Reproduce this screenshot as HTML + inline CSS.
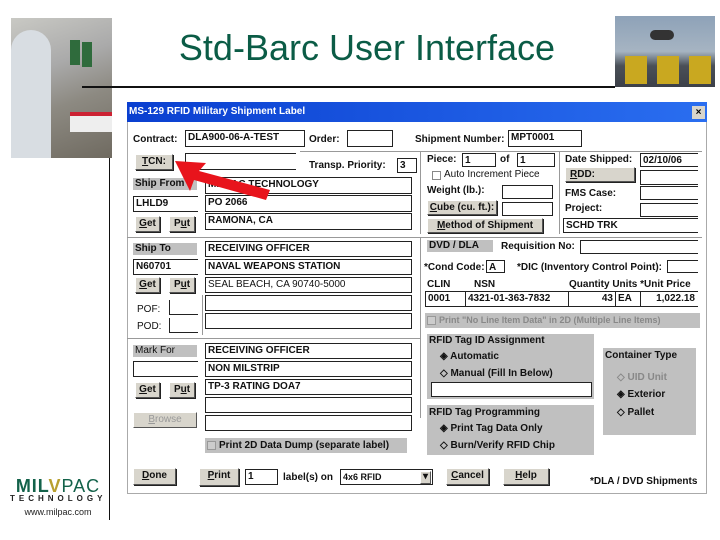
<!DOCTYPE html>
<html><head><meta charset="utf-8"><style>
*{margin:0;padding:0;box-sizing:border-box}
body{width:720px;height:540px;background:#fff;position:relative;overflow:hidden;font-family:"Liberation Sans",sans-serif}
.a{position:absolute}
.l{position:absolute;font-size:10px;font-weight:bold;color:#111;white-space:nowrap;line-height:12px}
.i{position:absolute;background:#fff;border:1px solid #222;font-size:10px;font-weight:bold;line-height:14px;padding-left:2px;white-space:nowrap;overflow:hidden;color:#111}
.b{position:absolute;background:#d8d5cc;border:1px solid;border-color:#fff #555 #555 #fff;box-shadow:1px 1px 0 #222;font-size:10px;font-weight:bold;text-align:center;line-height:14px;color:#111}
.g{position:absolute;background:#c0c0c0;font-size:10px;font-weight:bold;line-height:12px;padding-left:2px;color:#111;white-space:nowrap}
.hl{position:absolute;height:1px;background:#999}
.vl{position:absolute;width:1px;background:#999}
</style></head><body>
<div class="a" style="left:11px;top:18px;width:101px;height:140px;background:linear-gradient(160deg,#c9c9c4 0%,#aaa 35%,#8d8a82 60%,#6f6a60 100%)"></div>
<div class="a" style="left:11px;top:30px;width:40px;height:128px;background:#d8dde2;border-radius:20px 20px 0 0"></div>
<div class="a" style="left:70px;top:40px;width:10px;height:25px;background:#2f6b3c"></div>
<div class="a" style="left:82px;top:42px;width:10px;height:25px;background:#2f6b3c"></div>
<div class="a" style="left:70px;top:112px;width:42px;height:20px;background:#eee;border-top:4px solid #c23"></div>
<div class="a" style="left:615px;top:16px;width:100px;height:71px;background:linear-gradient(180deg,#8ea2b8 0%,#a6b4c2 50%,#4a5058 70%,#3c4048 100%)"></div>
<div class="a" style="left:625px;top:56px;width:22px;height:28px;background:#c9a820"></div>
<div class="a" style="left:657px;top:56px;width:22px;height:28px;background:#c9a820"></div>
<div class="a" style="left:689px;top:56px;width:22px;height:28px;background:#c9a820"></div>
<div class="a" style="left:650px;top:30px;width:24px;height:10px;background:#333;border-radius:5px"></div>
<div class="a" style="left:112px;top:28px;width:510px;text-align:center;font-size:36px;color:#0b5c46;line-height:40px">Std-Barc User Interface</div>
<div class="a" style="left:82px;top:86px;width:533px;height:2px;background:#111"></div>
<div class="a" style="left:109px;top:158px;width:1px;height:362px;background:#111"></div>
<div class="a" style="left:8px;top:477px;width:100px;text-align:center;font-size:18px;font-weight:bold;color:#13624a;letter-spacing:1px;line-height:18px">MIL<span style="color:#b8a030">V</span><span style="font-weight:normal">PAC</span></div>
<div class="a" style="left:10px;top:494px;width:96px;text-align:center;font-size:8px;font-weight:bold;letter-spacing:4px;color:#222">TECHNOLOGY</div>
<div class="a" style="left:10px;top:507px;width:96px;text-align:center;font-size:9px;color:#222">www.milpac.com</div>

<div class="a" style="left:127px;top:102px;width:580px;height:392px;background:#fff;border:1px solid #aaa"></div>
<div class="a" style="left:127px;top:102px;width:580px;height:20px;background:linear-gradient(90deg,#0a3fd0,#2a6ef0);color:#fff;font-size:10px;font-weight:bold;line-height:20px;padding-left:2px">MS-129 RFID Military Shipment Label</div>
<div class="a" style="left:692px;top:106px;width:13px;height:13px;background:#d8d5cc;font-size:10px;font-weight:bold;text-align:center;line-height:13px">×</div>

<div class="l" style="left:133px;top:134px">Contract:</div>
<div class="i" style="left:185px;top:130px;width:120px;height:17px">DLA900-06-A-TEST</div>
<div class="l" style="left:309px;top:134px">Order:</div>
<div class="i" style="left:347px;top:130px;width:46px;height:17px"></div>
<div class="l" style="left:415px;top:134px">Shipment Number:</div>
<div class="i" style="left:508px;top:130px;width:74px;height:17px">MPT0001</div>
<div class="hl" style="left:300px;top:151px;width:402px"></div>
<div class="b" style="left:135px;top:154px;width:38px;height:16px"><u>T</u>CN:</div>
<div class="i" style="left:185px;top:153px;width:111px;height:17px;border-right:none"></div>
<div class="l" style="left:309px;top:160px">Transp. Priority:</div>
<div class="i" style="left:397px;top:158px;width:20px;height:15px">3</div>
<div class="vl" style="left:420px;top:152px;height:82px"></div>
<div class="vl" style="left:559px;top:152px;height:82px"></div>

<div class="l" style="left:427px;top:154px">Piece:</div>
<div class="i" style="left:462px;top:153px;width:34px;height:14px">1</div>
<div class="l" style="left:500px;top:154px">of</div>
<div class="i" style="left:517px;top:153px;width:38px;height:14px">1</div>
<div class="a" style="left:432px;top:171px;width:9px;height:9px;border:1px solid #888"></div>
<div class="l" style="left:444px;top:169px;font-weight:normal">Auto Increment Piece</div>
<div class="l" style="left:427px;top:185px">Weight (lb.):</div>
<div class="i" style="left:502px;top:185px;width:51px;height:14px"></div>
<div class="b" style="left:427px;top:200px;width:70px;height:15px"><u>C</u>ube (cu. ft.):</div>
<div class="i" style="left:502px;top:202px;width:51px;height:14px"></div>
<div class="b" style="left:427px;top:218px;width:116px;height:15px"><u>M</u>ethod of Shipment</div>

<div class="l" style="left:565px;top:154px">Date Shipped:</div>
<div class="i" style="left:640px;top:153px;width:58px;height:14px;border-right:none">02/10/06</div>
<div class="b" style="left:565px;top:167px;width:70px;height:15px;text-align:left;padding-left:4px"><u>R</u>DD:</div>
<div class="i" style="left:640px;top:170px;width:58px;height:15px;border-right:none"></div>
<div class="l" style="left:565px;top:188px">FMS Case:</div>
<div class="i" style="left:640px;top:186px;width:58px;height:14px;border-right:none"></div>
<div class="l" style="left:565px;top:203px">Project:</div>
<div class="i" style="left:640px;top:203px;width:58px;height:14px;border-right:none"></div>
<div class="i" style="left:563px;top:218px;width:135px;height:15px;border-right:none">SCHD TRK</div>
<div class="hl" style="left:127px;top:237px;width:575px"></div>

<div class="g" style="left:427px;top:240px;width:66px;height:12px">DVD / DLA</div>
<div class="l" style="left:501px;top:241px">Requisition No:</div>
<div class="i" style="left:580px;top:240px;width:118px;height:14px;border-right:none"></div>
<div class="l" style="left:424px;top:262px">*Cond Code:</div>
<div class="i" style="left:486px;top:260px;width:19px;height:13px">A</div>
<div class="l" style="left:517px;top:262px">*DIC (Inventory Control Point):</div>
<div class="i" style="left:667px;top:260px;width:31px;height:13px;border-right:none"></div>
<div class="l" style="left:427px;top:279px">CLIN</div>
<div class="l" style="left:474px;top:279px">NSN</div>
<div class="l" style="left:569px;top:279px">Quantity Units *Unit Price</div>
<div class="i" style="left:425px;top:291px;width:41px;height:16px">0001</div>
<div class="i" style="left:465px;top:291px;width:104px;height:16px">4321-01-363-7832</div>
<div class="i" style="left:568px;top:291px;width:48px;height:16px;text-align:right;padding-right:2px">43</div>
<div class="i" style="left:615px;top:291px;width:26px;height:16px">EA</div>
<div class="i" style="left:640px;top:291px;width:58px;height:16px;text-align:right;padding-right:3px;border-right:none">1,022.18</div>
<div class="g" style="left:425px;top:313px;width:275px;height:15px;color:#888;line-height:15px;padding-left:14px;font-size:9px">Print "No Line Item Data" in 2D (Multiple Line Items)</div>
<div class="a" style="left:427px;top:316px;width:9px;height:9px;border:1px solid #999;background:#ccc"></div>

<div class="g" style="left:427px;top:334px;width:167px;height:65px"></div>
<div class="l" style="left:429px;top:335px">RFID Tag ID Assignment</div>
<div class="l" style="left:440px;top:351px">◈ Automatic</div>
<div class="l" style="left:440px;top:368px">◇ Manual (Fill In Below)</div>
<div class="i" style="left:431px;top:382px;width:161px;height:15px"></div>
<div class="g" style="left:427px;top:405px;width:167px;height:50px"></div>
<div class="l" style="left:429px;top:407px">RFID Tag Programming</div>
<div class="l" style="left:440px;top:423px">◈ Print Tag Data Only</div>
<div class="l" style="left:440px;top:440px">◇ Burn/Verify RFID Chip</div>
<div class="g" style="left:603px;top:348px;width:93px;height:87px"></div>
<div class="l" style="left:605px;top:350px">Container Type</div>
<div class="l" style="left:617px;top:372px;color:#888">◇ UID Unit</div>
<div class="l" style="left:617px;top:389px">◈ Exterior</div>
<div class="l" style="left:617px;top:407px">◇ Pallet</div>

<div class="g" style="left:133px;top:178px;width:64px;height:12px">Ship From</div>
<div class="i" style="left:205px;top:177px;width:207px;height:17px">MILPAC TECHNOLOGY</div>
<div class="i" style="left:133px;top:196px;width:65px;height:16px;border-right:none">LHLD9</div>
<div class="i" style="left:205px;top:195px;width:207px;height:17px">PO 2066</div>
<div class="b" style="left:135px;top:216px;width:25px;height:16px"><u>G</u>et</div>
<div class="b" style="left:169px;top:216px;width:26px;height:16px">P<u>u</u>t</div>
<div class="i" style="left:205px;top:213px;width:207px;height:17px">RAMONA, CA</div>

<div class="g" style="left:133px;top:243px;width:64px;height:12px">Ship To</div>
<div class="i" style="left:205px;top:241px;width:207px;height:16px">RECEIVING OFFICER</div>
<div class="i" style="left:133px;top:259px;width:65px;height:16px;border-right:none">N60701</div>
<div class="i" style="left:205px;top:259px;width:207px;height:16px">NAVAL WEAPONS STATION</div>
<div class="b" style="left:135px;top:277px;width:25px;height:16px"><u>G</u>et</div>
<div class="b" style="left:169px;top:277px;width:26px;height:16px">P<u>u</u>t</div>
<div class="i" style="left:205px;top:277px;width:207px;height:16px;font-weight:normal">SEAL BEACH, CA 90740-5000</div>
<div class="i" style="left:205px;top:295px;width:207px;height:16px"></div>
<div class="i" style="left:205px;top:313px;width:207px;height:16px"></div>
<div class="vl" style="left:202px;top:295px;height:40px"></div>
<div class="l" style="left:137px;top:304px;font-weight:normal">POF:</div>
<div class="a" style="left:169px;top:300px;width:29px;height:15px;border-left:1px solid #222;border-bottom:1px solid #222"></div>
<div class="l" style="left:137px;top:321px;font-weight:normal">POD:</div>
<div class="a" style="left:169px;top:318px;width:29px;height:15px;border-left:1px solid #222;border-bottom:1px solid #222"></div>
<div class="hl" style="left:127px;top:338px;width:293px"></div>
<div class="vl" style="left:420px;top:238px;height:100px"></div>

<div class="g" style="left:133px;top:345px;width:64px;height:12px;font-weight:normal">Mark For</div>
<div class="i" style="left:205px;top:343px;width:207px;height:16px">RECEIVING OFFICER</div>
<div class="i" style="left:133px;top:361px;width:65px;height:16px;border-right:none"></div>
<div class="i" style="left:205px;top:361px;width:207px;height:16px">NON MILSTRIP</div>
<div class="b" style="left:135px;top:382px;width:25px;height:16px"><u>G</u>et</div>
<div class="b" style="left:169px;top:382px;width:26px;height:16px">P<u>u</u>t</div>
<div class="i" style="left:205px;top:379px;width:207px;height:16px">TP-3 RATING DOA7</div>
<div class="i" style="left:205px;top:397px;width:207px;height:16px"></div>
<div class="i" style="left:205px;top:415px;width:207px;height:16px"></div>
<div class="b" style="left:133px;top:412px;width:64px;height:16px;color:#999;font-weight:normal;box-shadow:none"><u>B</u>rowse</div>
<div class="vl" style="left:420px;top:338px;height:80px"></div>
<div class="g" style="left:205px;top:438px;width:202px;height:15px;line-height:15px;padding-left:14px">Print 2D Data Dump (separate label)</div>
<div class="a" style="left:207px;top:441px;width:9px;height:9px;border:1px solid #999;background:#ccc"></div>

<div class="b" style="left:133px;top:468px;width:43px;height:17px"><u>D</u>one</div>
<div class="b" style="left:199px;top:468px;width:40px;height:18px"><u>P</u>rint</div>
<div class="i" style="left:245px;top:469px;width:33px;height:16px">1</div>
<div class="l" style="left:283px;top:472px">label(s) on</div>
<div class="i" style="left:340px;top:469px;width:93px;height:16px;font-size:9px">4x6 RFID</div>
<div class="b" style="left:420px;top:471px;width:11px;height:13px;box-shadow:none;line-height:10px">▾</div>
<div class="b" style="left:446px;top:468px;width:43px;height:17px"><u>C</u>ancel</div>
<div class="b" style="left:503px;top:468px;width:46px;height:17px"><u>H</u>elp</div>
<div class="l" style="left:590px;top:476px">*DLA / DVD Shipments</div>

<svg class="a" style="left:0;top:0" width="720" height="540"><polygon points="175,161 206,163 199,171 270,190 266,200 194,180 190,191" fill="#e8141c"/></svg>
</body></html>
